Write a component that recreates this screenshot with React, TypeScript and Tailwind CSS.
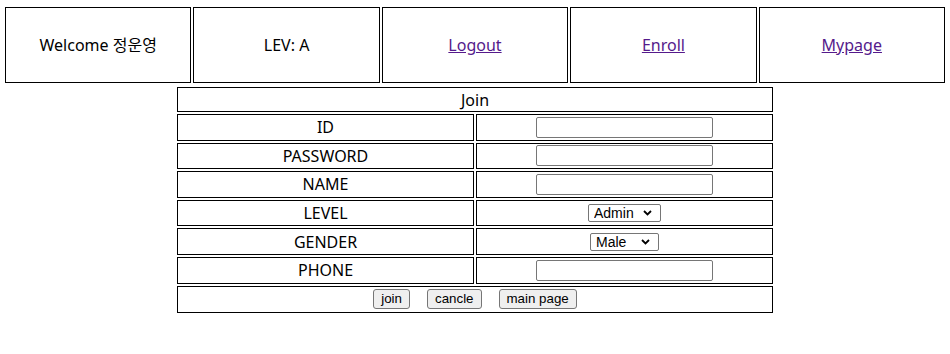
import React from 'react';

const font = { fontFamily: '"Noto Sans", "Noto Sans CJK KR", sans-serif' };

const Chevron = () => (
  <svg
    width="9"
    height="6"
    viewBox="0 0 9 6"
    className="pointer-events-none absolute right-[9px] top-1/2 -translate-y-1/2"
  >
    <path d="M1 1l3.5 3.5L8 1" fill="none" stroke="#000" strokeWidth="1.8" />
  </svg>
);

const Select = ({ options, width }: { options: string[]; width: string }) => (
  <span className="relative inline-flex">
    <select
      className={`appearance-none h-[18px] ${width} border border-[#767676] rounded-[2px] bg-white pl-[5px] py-0 text-[14px] leading-[16px] text-black font-['Liberation_Sans']`}
    >
      {options.map((o) => (
        <option key={o}>{o}</option>
      ))}
    </select>
    <Chevron />
  </span>
);

const TextInput = () => (
  <input
    type="text"
    className="h-[21px] w-[177px] border border-[#767676] rounded-[2px] bg-white px-1 text-[13.33px]"
  />
);

const Btn = ({ label }: { label: string }) => (
  <button className="h-[20px] px-[7px] border border-[#767676] rounded-[3px] bg-[#efefef] text-[13.33px] leading-[18px] text-black font-['Liberation_Sans']">
    {label}
  </button>
);

const rows: { label: string; field: React.ReactNode }[] = [
  { label: 'ID', field: <TextInput /> },
  { label: 'PASSWORD', field: <TextInput /> },
  { label: 'NAME', field: <TextInput /> },
  { label: 'LEVEL', field: <Select options={['Admin', 'User']} width="w-[73px]" /> },
  { label: 'GENDER', field: <Select options={['Male', 'Female']} width="w-[69px]" /> },
  { label: 'PHONE', field: <TextInput /> },
];

const App: React.FC = () => {
  return (
    <div className="w-[950px] h-[354px] bg-white text-black text-[16px]" style={font}>
      {/* header menu */}
      <div className="grid grid-cols-5 gap-[2px] px-[5px] pt-[7px]">
        <div className="h-[76px] border border-black flex items-center justify-center">Welcome 정운영</div>
        <div className="h-[76px] border border-black flex items-center justify-center">LEV: A</div>
        <div className="h-[76px] border border-black flex items-center justify-center">
          <a href="#" className="text-[#551a8b] underline">Logout</a>
        </div>
        <div className="h-[76px] border border-black flex items-center justify-center">
          <a href="#" className="text-[#551a8b] underline">Enroll</a>
        </div>
        <div className="h-[76px] border border-black flex items-center justify-center">
          <a href="#" className="text-[#551a8b] underline">Mypage</a>
        </div>
      </div>

      {/* join form */}
      <div className="w-[596px] mx-auto mt-[4px] flex flex-col gap-[2px]">
        <div className="h-[25px] border border-black flex items-center justify-center">Join</div>
        {rows.map((r) => (
          <div key={r.label} className="grid grid-cols-2 gap-[2px]">
            <div className="h-[26.6px] border border-black flex items-center justify-center">{r.label}</div>
            <div className="h-[26.6px] border border-black flex items-center justify-center">{r.field}</div>
          </div>
        ))}
        <div className="h-[27px] border border-black flex items-center justify-center gap-[17px]">
          <Btn label="join" />
          <Btn label="cancle" />
          <Btn label="main page" />
        </div>
      </div>
    </div>
  );
};

export default App;
